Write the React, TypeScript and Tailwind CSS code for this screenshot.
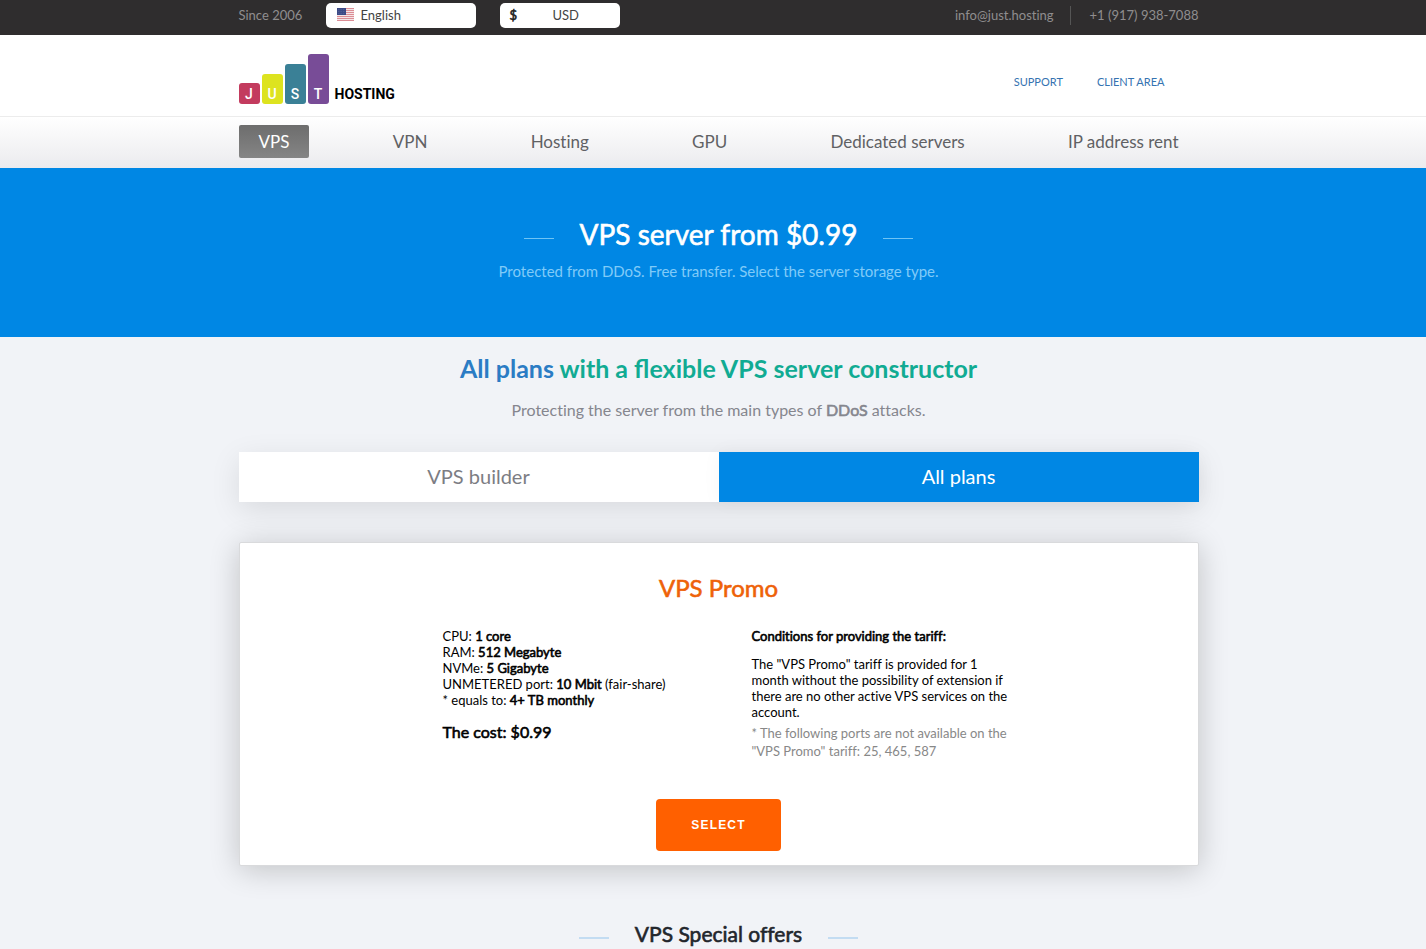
import { useState } from 'react';
import type { ReactNode } from 'react';

const NAV_ITEMS = ['VPS', 'VPN', 'Hosting', 'GPU', 'Dedicated servers', 'IP address rent'];

const SPECS = [
  { label: 'CPU:', value: '1 core', note: '' },
  { label: 'RAM:', value: '512 Megabyte', note: '' },
  { label: 'NVMe:', value: '5 Gigabyte', note: '' },
  { label: 'UNMETERED port:', value: '10 Mbit', note: '(fair-share)' },
  { label: '* equals to:', value: '4+ TB monthly', note: '' },
];

const LOGO_BARS = [
  { letter: 'J', className: 'h-[21px] bg-[#c33b5e]' },
  { letter: 'U', className: 'h-[30px] bg-[#dde31f]' },
  { letter: 'S', className: 'h-[40px] bg-[#3a8096]' },
  { letter: 'T', className: 'h-[50px] bg-[#784c97]' },
];

// Centered 960px column, shifted right by the page gutter
function Container({ className = '', children }: { className?: string; children: ReactNode }) {
  return (
    <div className="pl-[11px]">
      <div className={`mx-auto max-w-[960px] ${className}`}>{children}</div>
    </div>
  );
}

// Regular weight thickened with a stroke, keeps the regular letter widths
function Strong({ children }: { children: ReactNode }) {
  return <strong className="font-normal [-webkit-text-stroke:0.6px_currentColor]">{children}</strong>;
}

function UsFlag() {
  return (
    <svg viewBox="0 0 17 13" className="w-[17px] h-[13px]" aria-hidden="true">
      <rect width="17" height="13" fill="#f4e4e6" />
      {[0, 2, 4, 6, 8, 10, 12].map(y => (
        <rect key={y} y={y} width="17" height="1" fill="#dc8d95" />
      ))}
      <rect width="9" height="7" fill="#3c4a86" />
      {[1, 3, 5].map(y => (
        <path key={y} d={`M1 ${y + 0.5}H8`} stroke="#7681ad" strokeWidth="0.5" strokeDasharray="0.7 1" />
      ))}
    </svg>
  );
}

function TopBar() {
  return (
    <div className="bg-[#2f2d2e] text-[#8f8d8e] text-[13px]">
      <Container className="flex h-[35px] items-center pb-1">
        <span className="w-[87px]">Since 2006</span>
        <label className="relative mr-6">
          <span className="absolute left-[11px] top-[5px]"><UsFlag /></span>
          <select aria-label="Language" className="block w-[150px] h-[25px] appearance-none rounded-[5px] bg-white pt-px pl-[35px] text-[13px] text-[#444]">
            <option>English</option>
          </select>
        </label>
        <label className="relative">
          <span className="absolute left-[10px] top-[3px] text-[#222]"><Strong>$</Strong></span>
          <select aria-label="Currency" className="block w-[120px] h-[25px] appearance-none rounded-[5px] bg-white pt-px pl-[53px] text-[13px] text-[#444]">
            <option>USD</option>
          </select>
        </label>
        <div className="ml-auto flex items-center">
          <a href="#mail" className="border-r border-[#555] pr-4">info@just.hosting</a>
          <a href="#phone" className="pl-[19px]">+1 (917) 938-7088</a>
        </div>
      </Container>
    </div>
  );
}

function Logo() {
  return (
    <a href="#home" className="flex items-end gap-[6px] font-['Liberation_Sans_Narrow','Roboto',sans-serif]">
      <span className="flex items-end gap-[2px]">
        {LOGO_BARS.map(bar => (
          <span
            key={bar.letter}
            className={`flex w-[21px] items-end justify-center rounded-[3px] text-[14px] leading-5 font-medium text-white ${bar.className}`}
          >
            {bar.letter}
          </span>
        ))}
      </span>
      <span className="text-[14px] leading-5 font-bold text-black">HOSTING</span>
    </a>
  );
}

function Header() {
  return (
    <header className="border-b border-[#ececec] bg-white">
      <Container className="flex h-[81px] items-end justify-between pb-3">
        <Logo />
        <div className="flex gap-[34px] pr-[34px] pb-[14px] text-[11px] leading-4 text-[#3573b1]">
          <a href="#support">SUPPORT</a>
          <a href="#client">CLIENT AREA</a>
        </div>
      </Container>
    </header>
  );
}

function MainNav() {
  return (
    <nav className="bg-linear-to-b from-white to-[#ebebee]">
      <Container className="flex h-[51px] items-center justify-between pb-[2px]">
        {NAV_ITEMS.map((item, i) => (
          <a
            key={item}
            href={`#${item}`}
            className={`rounded-[2px] px-5 text-[17px] leading-[33px] ${
              i === 0 ? 'bg-linear-to-b from-[#6d6d6d] to-[#858585] text-white' : 'text-[#606164]'
            }`}
          >
            {item}
          </a>
        ))}
      </Container>
    </nav>
  );
}

function Hero() {
  return (
    <section className="h-[169px] bg-[#0087e4] pt-[45px] text-center">
      <Container>
        <h1 className="flex items-center justify-center gap-[26px] text-[28px] leading-[42px] text-white">
          <span className="mt-2 h-px w-[30px] bg-[#6fc4f5]" />
          <Strong>VPS server from $0.99</Strong>
          <span className="mt-2 h-px w-[30px] bg-[#6fc4f5]" />
        </h1>
        <p className="mt-1 text-[15px] leading-6 text-[#80cbf8]">
          Protected from DDoS. Free transfer. Select the server storage type.
        </p>
      </Container>
    </section>
  );
}

function PlanTabs() {
  const [active, setActive] = useState('All plans');

  return (
    <div className="mt-[30px] grid grid-cols-2 bg-white shadow-[0_8px_30px_rgba(0,0,0,0.1)]">
      {['VPS builder', 'All plans'].map(tab => (
        <button
          key={tab}
          onClick={() => setActive(tab)}
          className={`h-[50px] pb-[2px] text-[20px] ${
            active === tab ? 'bg-[#0087e4] text-white shadow-[0_0_20px_rgba(0,0,0,0.04)]' : 'text-[#7c7d83]'
          }`}
        >
          {tab}
        </button>
      ))}
    </div>
  );
}

function PromoCard() {
  return (
    <article className="mt-10 rounded-[2px] border border-[#d9dadc] bg-white pt-[26px] pb-[14px] text-center text-[13px] leading-4 text-black shadow-[0_4px_30px_rgba(0,0,0,0.2)]">
      <h3 className="text-[24px] leading-[38px] text-[#ee6208]"><Strong>VPS Promo</Strong></h3>
      <div className="mx-auto mt-[21px] grid w-[556px] grid-cols-[309px_1fr] pl-[2px] text-left">
        <div>
          <ul>
            {SPECS.map(spec => (
              <li key={spec.label}>
                {spec.label} <Strong>{spec.value}</Strong> {spec.note}
              </li>
            ))}
          </ul>
          <p className="mt-3 text-[16px] leading-6"><Strong>The cost: $0.99</Strong></p>
        </div>
        <div className="-mr-8">
          <p><Strong>Conditions for providing the tariff:</Strong></p>
          <p className="mt-3 w-[265px]">
            The "VPS Promo" tariff is provided for 1 month without the possibility of extension if there are no
            other active VPS services on the account.
          </p>
          <p className="mt-1 w-[265px] leading-[18px] text-[#888]">
            * The following ports are not available on the "VPS Promo" tariff: 25, 465, 587
          </p>
        </div>
      </div>
      <button className="mt-[39px] h-[52px] w-[125px] rounded-[4px] bg-[#ff6000] font-['Liberation_Sans',sans-serif] text-[12px] font-bold tracking-widest text-white">
        SELECT
      </button>
    </article>
  );
}

export default function App() {
  return (
    <div className="min-h-screen bg-[#f1f3f7] font-['Lato',sans-serif] [font-variant-ligatures:none]">
      <TopBar />
      <Header />
      <MainNav />
      <Hero />
      <main>
        <Container className="pt-[15px] text-center">
          <h2 className="text-[25px] leading-8 font-bold text-[#11ab93] [font-variant-ligatures:normal]">
            <span className="text-[#2b7cc4]">All plans</span> with a flexible VPS server constructor
          </h2>
          <p className="mt-[14px] text-[16px] leading-6 text-[#85868e]">
            Protecting the server from the main types of <Strong>DDoS</Strong> attacks.
          </p>
          <PlanTabs />
          <PromoCard />
          <h2 className="mt-[52px] flex items-center justify-center gap-[26px] text-[21px] leading-8 text-[#22262c]">
            <span className="mt-2 h-[2px] w-[30px] bg-[#c3dcf2]" />
            <Strong>VPS Special offers</Strong>
            <span className="mt-2 h-[2px] w-[30px] bg-[#c3dcf2]" />
          </h2>
        </Container>
      </main>
    </div>
  );
}
